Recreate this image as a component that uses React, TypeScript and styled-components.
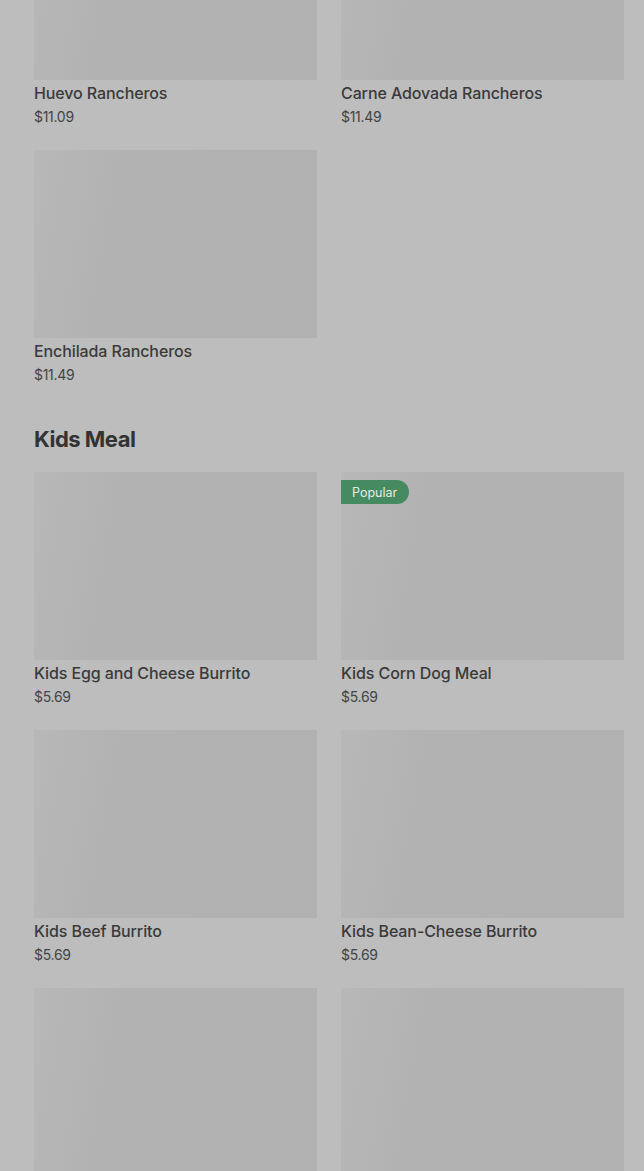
import React, {FC} from 'react';
import styled, {createGlobalStyle} from 'styled-components';

type Item = {name?: string; price?: string; popular?: boolean};
type Section = {title?: string; items: Item[]};

// last row is only partly on screen, so its labels are left out
const sections: Section[] = [
    {
        items: [
            {name: 'Huevo Rancheros', price: '$11.09'},
            {name: 'Carne Adovada Rancheros', price: '$11.49'},
            {name: 'Enchilada Rancheros', price: '$11.49'},
        ],
    },
    {
        title: 'Kids Meal',
        items: [
            {name: 'Kids Egg and Cheese Burrito', price: '$5.69'},
            {name: 'Kids Corn Dog Meal', price: '$5.69', popular: true},
            {name: 'Kids Beef Burrito', price: '$5.69'},
            {name: 'Kids Bean-Cheese Burrito', price: '$5.69'},
            {},
            {},
        ],
    },
];

const GlobalStyle = createGlobalStyle`
    html, body {
        margin: 0;
        padding: 0;
        background: #bdbdbd;
        overflow: hidden;
    }
    body {
        font-family: Inter, "Liberation Sans", sans-serif;
        color: #3a3a3a;
    }
`;

export default function App() {
    return (
        <>
            <GlobalStyle/>
            <Page>
                {sections.map((s, i) => (
                    <MenuSection key={i} section={s}/>
                ))}
            </Page>
        </>
    );
}

const MenuSection: FC<{section: Section}> = ({section}) => (
    <SectionWrapper>
        {section.title && <SectionTitle>{section.title}</SectionTitle>}
        <Grid>
            {section.items.map((item, i) => (
                <Card key={i}>
                    <Thumb>
                        {item.popular && <Badge>Popular</Badge>}
                    </Thumb>
                    {item.name && <ItemName>{item.name}</ItemName>}
                    {item.price && <Price>{item.price}</Price>}
                </Card>
            ))}
        </Grid>
    </SectionWrapper>
);

const Page = styled.div`
    padding: 0 20px 0 34px;
    margin-top: -108px;
    height: 1279px;
    overflow: hidden;
`;

const SectionWrapper = styled.section`
    display: flex;
    flex-direction: column;
`;

const SectionTitle = styled.h2`
    margin: 40px 0 19px;
    font-size: 22px;
    line-height: 28px;
    font-weight: 700;
    letter-spacing: -0.5px;
    color: #333;
`;

const Grid = styled.div`
    display: grid;
    grid-template-columns: 1fr 1fr;
    column-gap: 24px;
    row-gap: 23px;
`;

const Card = styled.div`
    display: flex;
    flex-direction: column;
`;

const Thumb = styled.div`
    position: relative;
    height: 188px;
    background: linear-gradient(100deg, #b8b8b8 0%, #b2b2b2 28%, #b1b1b1 100%);
`;

const Badge = styled.span`
    position: absolute;
    top: 8px;
    left: 0;
    height: 24px;
    padding: 0 12px 0 11px;
    display: flex;
    align-items: center;
    background: #468a62;
    color: #e4ece7;
    font-size: 12.5px;
    border-radius: 0 12px 12px 0;
`;

const ItemName = styled.div`
    margin-top: 3px;
    font-size: 16px;
    line-height: 20px;
    font-weight: 500;
    color: #3a3a3a;
    letter-spacing: -0.1px;
`;

const Price = styled.div`
    margin-top: 4px;
    font-size: 14px;
    line-height: 20px;
    color: #444;
    letter-spacing: -0.3px;
`;
